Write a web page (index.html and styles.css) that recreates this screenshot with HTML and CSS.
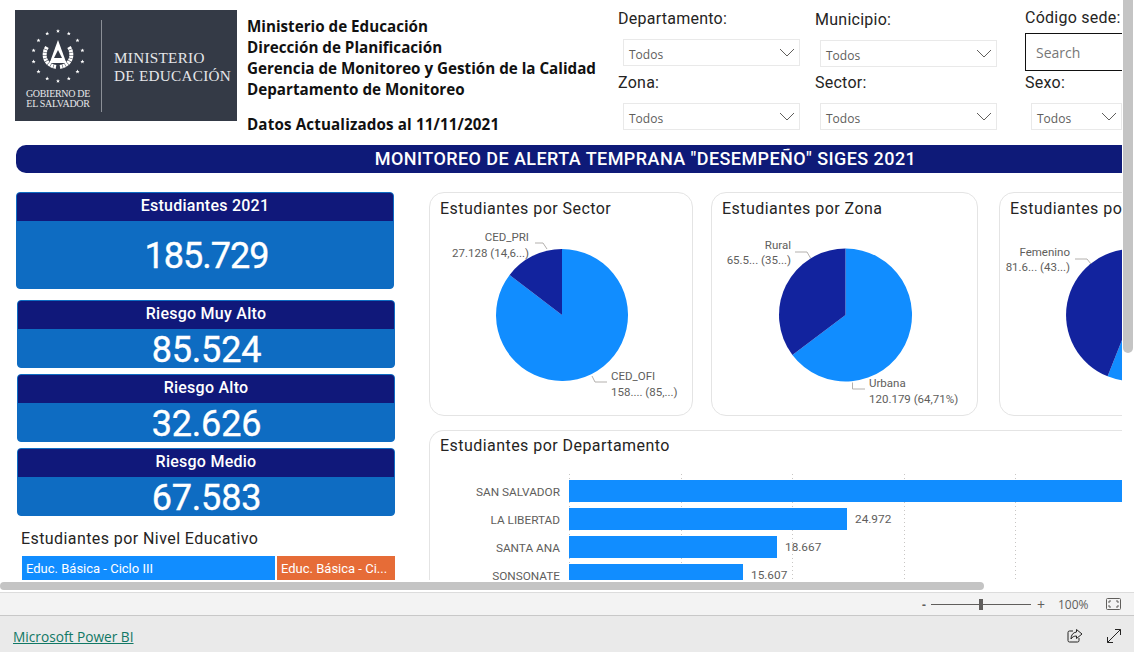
FILE: index.html
```html
<!DOCTYPE html>
<html lang="es">
<head>
<meta charset="utf-8">
<title>Monitoreo de Alerta Temprana</title>
<link rel="stylesheet" href="styles.css">
</head>
<body>
<main class="viewport">
  <div class="report">
    <header class="top">
      <div class="logo">
        <div class="seal">
          <svg class="emblem" viewBox="0 0 60 54" width="60" height="54">
            <defs><polygon id="star" points="0,-2 .6,-.6 2,-.6 .9,.3 1.300,1.800 0,.9 -1.300,1.800 -.9,.3 -2,-.6 -.6,-.6"/></defs>
            <g fill="#fff">
              <use href="#star" x="30" y="2"/><use href="#star" x="40.800" y="4.500"/><use href="#star" x="49.500" y="11.400"/><use href="#star" x="54.400" y="21.400"/><use href="#star" x="54.400" y="32.600"/><use href="#star" x="49.500" y="42.600"/><use href="#star" x="40.800" y="49.500"/><use href="#star" x="30" y="52"/><use href="#star" x="19.200" y="49.500"/><use href="#star" x="10.500" y="42.600"/><use href="#star" x="5.600" y="32.600"/><use href="#star" x="5.600" y="21.400"/><use href="#star" x="10.500" y="11.400"/><use href="#star" x="19.200" y="4.500"/>
              <path d="M30 11l8 22H22z"/>
            </g>
            <path d="M30 21l4 8H26z" fill="#343a46"/>
            <path class="wreath" d="M19 18C14 26 17 36 28 38"/>
            <path class="wreath" d="M41 18C46 26 43 36 32 38"/>
            <rect x="22" y="32" width="16" height="2" fill="#fff"/>
          </svg>
          <span class="seal-text">GOBIERNO DE<br>EL SALVADOR</span>
        </div>
        <div class="logo-rule"></div>
        <div class="logo-name">MINISTERIO<br>DE EDUCACIÓN</div>
      </div>
      <div class="heading">
        <p>Ministerio de Educación</p>
        <p>Dirección de Planificación</p>
        <p>Gerencia de Monitoreo y Gestión de la Calidad</p>
        <p>Departamento de Monitoreo</p>
        <p class="updated">Datos Actualizados al 11/11/2021</p>
      </div>
      <div class="filters">
        <div class="filter"><span class="filter-label">Departamento:</span>
          <div class="select"><span>Todos</span><svg class="chev" viewBox="0 0 16 9"><path d="M1 1l7 7 7-7"/></svg></div></div>
        <div class="filter filter-low"><span class="filter-label">Municipio:</span>
          <div class="select"><span>Todos</span><svg class="chev" viewBox="0 0 16 9"><path d="M1 1l7 7 7-7"/></svg></div></div>
        <div class="filter filter-high"><span class="filter-label">Código sede:</span>
          <div class="search">Search</div></div>
        <div class="filter"><span class="filter-label">Zona:</span>
          <div class="select"><span>Todos</span><svg class="chev" viewBox="0 0 16 9"><path d="M1 1l7 7 7-7"/></svg></div></div>
        <div class="filter"><span class="filter-label">Sector:</span>
          <div class="select"><span>Todos</span><svg class="chev" viewBox="0 0 16 9"><path d="M1 1l7 7 7-7"/></svg></div></div>
        <div class="filter"><span class="filter-label">Sexo:</span>
          <div class="select narrow"><span>Todos</span><svg class="chev" viewBox="0 0 16 9"><path d="M1 1l7 7 7-7"/></svg></div></div>
      </div>
    </header>

    <h1 class="banner">MONITOREO DE ALERTA TEMPRANA "DESEMPEÑO" SIGES 2021</h1>

    <section class="content">
      <div class="left">
        <div class="kpi kpi-main"><div class="kpi-head">Estudiantes 2021</div><div class="kpi-value">185.729</div></div>
        <div class="kpi"><div class="kpi-head">Riesgo Muy Alto</div><div class="kpi-value">85.524</div></div>
        <div class="kpi"><div class="kpi-head">Riesgo Alto</div><div class="kpi-value">32.626</div></div>
        <div class="kpi"><div class="kpi-head">Riesgo Medio</div><div class="kpi-value">67.583</div></div>
        <h2 class="nivel-title">Estudiantes por Nivel Educativo</h2>
        <div class="treemap">
          <div class="tile tile-blue">Educ. Básica - Ciclo III</div>
          <div class="tile tile-orange">Educ. Básica - Ci...</div>
        </div>
      </div>
      <div class="right">
        <div class="pies">
          <article class="card pie-card card-sector">
            <h2 class="card-title">Estudiantes por Sector</h2>
            <svg class="chart" viewBox="0 0 263 223" width="263" height="223">
              <path class="slice-light" d="M132 56A66 66 0 1 1 79.600 81.900L132 122z"/>
              <path class="slice-dark" d="M132 56A66 66 0 0 0 79.600 81.900L132 122z"/>
              <path class="leader" d="M105 50h8l4 6"/>
              <path class="leader" d="M162 183l3 6h12"/>
              <text class="lbl" x="99" y="47.500" text-anchor="end">CED_PRI</text>
              <text class="lbl" x="99" y="63.500" text-anchor="end">27.128 (14,6...)</text>
              <text class="lbl" x="181" y="186.500">CED_OFI</text>
              <text class="lbl" x="181" y="202.500">158.... (85,...)</text>
            </svg>
          </article>
          <article class="card pie-card card-zona">
            <h2 class="card-title">Estudiantes por Zona</h2>
            <svg class="chart" viewBox="0 0 266 223" width="266" height="223">
              <path class="slice-light" d="M133.500 55.500A66.500 66.500 0 1 1 80.400 162L133.500 122z"/>
              <path class="slice-dark" d="M133.500 55.500A66.500 66.500 0 0 0 80.400 162L133.500 122z"/>
              <path class="leader" d="M83 59h12l3.500 6"/>
              <path class="leader" d="M140.500 189.500V196H153"/>
              <text class="lbl" x="79" y="56" text-anchor="end">Rural</text>
              <text class="lbl" x="79" y="71" text-anchor="end">65.5... (35...)</text>
              <text class="lbl" x="157" y="194">Urbana</text>
              <text class="lbl" x="157" y="209.500">120.179 (64,71%)</text>
            </svg>
          </article>
          <article class="card pie-card card-sexo">
            <h2 class="card-title">Estudiantes por Sexo</h2>
            <svg class="chart" viewBox="0 0 266 223" width="266" height="223">
              <path class="slice-light" d="M132 56A66 66 0 1 1 107.600 183.300L132 122z"/>
              <path class="slice-dark" d="M132 56A66 66 0 0 0 107.600 183.300L132 122z"/>
              <path class="leader" d="M75 66h12l4 5"/>
              <text class="lbl" x="70" y="63" text-anchor="end">Femenino</text>
              <text class="lbl" x="70" y="78" text-anchor="end">81.6... (43...)</text>
            </svg>
          </article>
        </div>
        <article class="card dept">
          <h2 class="card-title">Estudiantes por Departamento</h2>
          <div class="bars">
            <div class="grid-lines"><i></i><i></i><i></i><i></i><i></i></div>
            <div class="bar-row"><span class="bar-name">SAN SALVADOR</span><div class="bar bar-full"></div></div>
            <div class="bar-row"><span class="bar-name">LA LIBERTAD</span><div class="bar" style="width:278px"></div><span class="bar-val">24.972</span></div>
            <div class="bar-row"><span class="bar-name">SANTA ANA</span><div class="bar" style="width:208px"></div><span class="bar-val">18.667</span></div>
            <div class="bar-row"><span class="bar-name">SONSONATE</span><div class="bar" style="width:174px"></div><span class="bar-val">15.607</span></div>
          </div>
        </article>
      </div>
    </section>
  </div>
  <div class="scroll-h"></div>
  <div class="scroll-v"></div>
</main>

<div class="zoombar">
  <span class="zb-minus">-</span>
  <div class="slider"><div class="thumb"></div></div>
  <span class="zb-plus">+</span>
  <span class="zb-pct">100%</span>
  <svg class="fit" viewBox="0 0 15 12" width="15" height="12"><rect x="0.500" y="0.500" width="14" height="11" rx="1"/><path d="M3 5V3h2M10 3h2v2M12 7v2h-2M5 9H3V7"/></svg>
</div>

<footer class="footer">
  <a class="pbi" href="#">Microsoft Power BI</a>
  <div class="foot-icons">
    <svg viewBox="0 0 16 16" width="16" height="16"><path d="M6 3H2.500A1.500 1.500 0 0 0 1 4.500v8A1.500 1.500 0 0 0 2.500 14h8a1.500 1.500 0 0 0 1.500-1.500V10"/><path d="M9.500 1.500L15 6l-5.500 4.500V8C7 8 5 9 4 11c0-4 2-6.500 5.500-7z"/></svg>
    <svg viewBox="0 0 16 16" width="16" height="16"><path d="M1.500 14.500l13-13M9 1.500h5.500V7M1.500 9v5.500H7"/></svg>
  </div>
</footer>
</body>
</html>
```

FILE: styles.css
```css
* { box-sizing: border-box; }
html, body { margin: 0; padding: 0; }
body { width: 1134px; height: 652px; overflow: hidden; background: #fff; font-family: "Open Sans", "Noto Sans", sans-serif; color: #252423; }
h1, h2, p { margin: 0; font-weight: 400; }

.viewport { position: relative; height: 592px; overflow: hidden; background: #fff; }
.report { width: 1122px; height: 580px; overflow: hidden; padding: 10px 0 0 15px; }

.top { display: flex; height: 135px; }
.logo { flex: none; width: 222px; height: 111px; background: #343a46; color: #e6e7ea; display: flex; align-items: center; font-family: "Liberation Serif", serif; }
.seal { width: 85px; display: flex; flex-direction: column; align-items: center; padding: 6px 0 0 1px; }
.emblem { display: block; margin-bottom: 6px; }
.wreath { fill: none; stroke: #fff; stroke-width: 4; stroke-dasharray: 2.500 0.500; }
.seal-text { font-size: 10px; line-height: 10px; text-align: center; letter-spacing: -0.300px; white-space: nowrap; }
.logo-rule { width: 1px; height: 92px; background: #8b8f97; margin-left: 1px; }
.logo-name { margin: 2px 0 0 12px; font-size: 15.200px; line-height: 18px; letter-spacing: 0.300px; white-space: nowrap; }

.heading { flex: none; width: 381px; padding: 6px 0 0 10px; font-size: 15.200px; line-height: 21px; color: #111; }
.heading p { font-weight: 700; white-space: nowrap; }
.heading .updated { margin-top: 14px; letter-spacing: 0.130px; }

.filters { flex: 1; display: grid; grid-template-columns: 197px 210px 97px; grid-template-rows: 64px 64px; padding-top: 1px; }
.filter { display: flex; flex-direction: column; }
.filter-low { padding-top: 1px; }
.filter-high { margin-top: -1px; }
.filter-label { font-family: Roboto, sans-serif; font-size: 16px; line-height: 19px; color: #252423; letter-spacing: 0.250px; margin-top: -2px; white-space: nowrap; }
.select { margin: 11px 0 0 5px; width: 177px; height: 27px; border: 1px solid #e9e9e9; display: flex; align-items: center; justify-content: space-between; padding: 3px 4px 0 5px; font-size: 12px; color: #605e5c; }
.select.narrow { width: 91px; margin-left: 6px; }
.chev { width: 16px; height: 9px; margin-top: -3px; fill: none; stroke: #605e5c; stroke-width: 1; }
.search { margin-top: 6px; width: 97px; height: 38px; border: 1px solid #111; border-right: 0; padding: 0 0 0 10px; display: flex; align-items: center; font-size: 14px; color: #777; }

.banner { width: 1107px; height: 28px; margin-left: 1px; padding-left: 152px; background: #0e1a78; border-radius: 10px 0 0 10px; color: #fff; font-family: Roboto, sans-serif; font-weight: 500; font-size: 18px; letter-spacing: 0.430px; line-height: 28px; text-align: center; white-space: nowrap; }

.content { display: flex; margin-top: 19px; }
.left { flex: none; width: 414px; padding-left: 1px; display: flex; flex-direction: column; gap: 6px; }
.kpi { width: 378px; height: 68px; margin-left: 1px; border-radius: 4px; border: 1px solid #0e6cc2; background: #0e6cc2; color: #fff; font-family: Roboto, sans-serif; text-align: center; }
.kpi-main { height: 97px; margin-left: 0; margin-bottom: 5px; }
.kpi-head { height: 28px; border-radius: 3px 3px 0 0; background: #10187a; font-weight: 500; font-size: 16px; letter-spacing: 0.250px; line-height: 25px; }
.kpi-value { font-weight: 400; -webkit-text-stroke: 0.400px #fff; font-size: 36px; padding: 4px 0 0 1px; line-height: 34px; letter-spacing: -0.200px; }
.kpi-main .kpi-value { padding: 2px 0 0 3px; line-height: 66px; letter-spacing: -1px; }
.nivel-title { font-family: Roboto, sans-serif; font-size: 16px; line-height: 20px; margin: 7px 0 0 5px; letter-spacing: 0.420px; color: #252423; white-space: nowrap; }
.treemap { display: flex; margin: 1px 0 0 6px; gap: 2px; }
.tile { height: 24px; font-family: Roboto, sans-serif; font-size: 13px; line-height: 25px; color: #fff; padding-left: 4px; white-space: nowrap; }
.tile-blue { width: 253px; background: #118dff; }
.tile-orange { width: 118px; background: #e66c37; }

.right { flex: none; width: 693px; }
.pies { display: flex; gap: 18px; height: 238px; }
.card { flex: none; background: #fff; border: 1px solid #e4e4e4; border-radius: 15px; }
.pie-card { position: relative; height: 224px; }
.card-sector { width: 264px; }
.card-zona { width: 267px; }
.card-sexo { width: 267px; margin-left: 3px; }
.card-title { font-family: Roboto, sans-serif; font-size: 16px; line-height: 20px; padding: 6px 0 0 10px; letter-spacing: 0.450px; color: #252423; white-space: nowrap; }
.chart { position: absolute; left: 0; top: 0; }
.slice-light { fill: #118dff; }
.slice-dark { fill: #12239e; }
.leader { fill: none; stroke: #b3b0ad; stroke-width: 1; }
.lbl { font-family: Roboto, sans-serif; font-size: 11.500px; fill: #605e5c; }

.dept { width: 720px; height: 200px; border-radius: 15px 0 0 0; border-right: 0; border-bottom: 0; }
.dept .card-title { padding-top: 5px; }
.bars { position: relative; margin-top: 18px; padding-top: 6px; display: flex; flex-direction: column; gap: 6px; }
.grid-lines { position: absolute; left: 139px; top: 0; width: 447px; display: flex; justify-content: space-between; }
.grid-lines i { width: 1px; height: 110px; background: repeating-linear-gradient(to bottom, #c8c6c4 0 1px, transparent 1px 4px); }
.bar-row { position: relative; display: flex; align-items: center; height: 22px; }
.bar-name { flex: none; width: 130px; text-align: right; margin-right: 9px; font-family: Roboto, sans-serif; font-size: 11.800px; line-height: 20px; margin-top: 1px; color: #605e5c; white-space: nowrap; }
.bar { flex: none; height: 22px; background: #118dff; }
.bar-full { width: 560px; }
.bar-val { margin: -1px 0 0 8px; font-family: Roboto, sans-serif; font-size: 11.800px; color: #605e5c; }

.scroll-h { position: absolute; left: 0; top: 582px; width: 984px; height: 8px; border-radius: 4px; background: #c4c4c4; }
.scroll-v { position: absolute; right: 1px; top: 0; width: 10px; height: 353px; border-radius: 0 0 5px 5px; background: #c4c4c4; }

.zoombar { height: 24px; background: #f3f3f3; border-top: 1px solid #dcdcdc; border-bottom: 1px solid #c8c8c8; display: flex; align-items: center; padding-left: 922px; color: #605e5c; font-size: 12px; }
.zb-minus { width: 9px; font-weight: 700; }
.slider { position: relative; width: 100px; height: 1px; background: #605e5c; }
.thumb { position: absolute; left: 48px; top: -5px; width: 4px; height: 11px; background: #605e5c; }
.zb-plus { width: 27px; padding-left: 6px; font-size: 14px; }
.zb-pct { width: 48px; }
.fit { fill: none; stroke: #605e5c; stroke-width: 1; }

.footer { height: 36px; background: #eaeaea; display: flex; align-items: center; justify-content: space-between; padding: 4px 12px 0 13px; }
.pbi { font-size: 13.700px; color: #117865; text-decoration: underline; }
.foot-icons { display: flex; gap: 23px; }
.foot-icons svg { fill: none; stroke: #252423; stroke-width: 1; }
```
